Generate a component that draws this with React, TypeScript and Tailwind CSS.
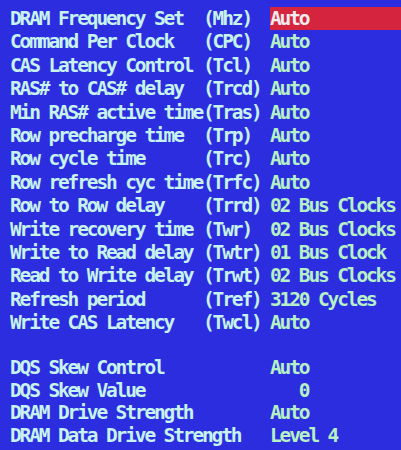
import React from 'react';

type Row = { label: string; code?: string; value: string; selected?: boolean };

const timings: Row[] = [
  { label: 'DRAM Frequency Set', code: '(Mhz)', value: 'Auto', selected: true },
  { label: 'Command Per Clock', code: '(CPC)', value: 'Auto' },
  { label: 'CAS Latency Control', code: '(Tcl)', value: 'Auto' },
  { label: 'RAS# to CAS# delay', code: '(Trcd)', value: 'Auto' },
  { label: 'Min RAS# active time', code: '(Tras)', value: 'Auto' },
  { label: 'Row precharge time', code: '(Trp)', value: 'Auto' },
  { label: 'Row cycle time', code: '(Trc)', value: 'Auto' },
  { label: 'Row refresh cyc time', code: '(Trfc)', value: 'Auto' },
  { label: 'Row to Row delay', code: '(Trrd)', value: '02 Bus Clocks' },
  { label: 'Write recovery time', code: '(Twr)', value: '02 Bus Clocks' },
  { label: 'Write to Read delay', code: '(Twtr)', value: '01 Bus Clock' },
  { label: 'Read to Write delay', code: '(Trwt)', value: '02 Bus Clocks' },
  { label: 'Refresh period', code: '(Tref)', value: '3120 Cycles' },
  { label: 'Write CAS Latency', code: '(Twcl)', value: 'Auto' },
];

const drive: Row[] = [
  { label: 'DQS Skew Control', value: 'Auto' },
  { label: 'DQS Skew Value', value: '   0' },
  { label: 'DRAM Drive Strength', value: 'Auto' },
  { label: 'DRAM Data Drive Strength', value: 'Level 4' },
];

const font = "font-['DejaVu_Sans_Mono','Liberation_Mono',monospace] font-bold text-[19.5px] tracking-[-2.14px] leading-[23.4px] whitespace-pre";

export default function App() {
  return (
    <div className={`w-[401px] h-[450px] overflow-hidden bg-[#2d2de0] pt-[7px] pl-[10px] ${font}`}>
      {timings.map((r) => (
        <div key={r.label} className="grid grid-cols-[193px_67px_1fr] h-[23.4px]">
          <span className="text-[#c6f2f0]">{r.label}</span>
          <span className="text-[#c6f2f0]">{r.code}</span>
          <span className={r.selected ? 'bg-[#d4243e] text-[#f4ecee] -mr-[1px]' : 'text-[#b6f0c6]'}>{r.value}</span>
        </div>
      ))}
      <div className="h-[22px]" />
      {drive.map((r) => (
        <div key={r.label} className="grid grid-cols-[260px_1fr] h-[22.5px]">
          <span className="text-[#c6f2f0]">{r.label}</span>
          <span className="text-[#b6f0c6]">{r.value}</span>
        </div>
      ))}
    </div>
  );
}
